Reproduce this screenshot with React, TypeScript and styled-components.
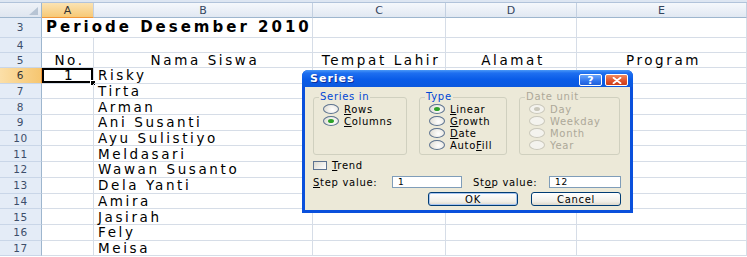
import React from 'react';
import styled, { createGlobalStyle, css } from 'styled-components';

const GlobalStyle = createGlobalStyle`
  html, body {
    margin: 0;
    padding: 0;
    background: #ffffff;
  }
`;

const Page = styled.div`
  position: relative;
  width: 747px;
  height: 257px;
  overflow: hidden;
  background: #fff;
  font-family: 'DejaVu Sans', 'Liberation Sans', sans-serif;
`;

const FormulaEdge = styled.div`
  height: 2px;
  background: #dde6f2;
  border-bottom: 1px solid #b1c3da;
`;

const Sheet = styled.div`
  display: grid;
  grid-template-columns: 42px 52px 219px 133px 131px 170px;
  grid-template-rows: 15px 19.5px 15px 15.5px repeat(12, 15.7px);
`;

const Corner = styled.div`
  box-sizing: border-box;
  display: flex;
  align-items: flex-end;
  justify-content: flex-end;
  padding: 0 3px 2px 0;
  background: linear-gradient(#eef2f8, #dfe6f0);
  border-right: 1px solid #9eb6ce;
  border-bottom: 1px solid #9eb6ce;
`;

const ColHead = styled.div<{ $active?: boolean }>`
  box-sizing: border-box;
  display: flex;
  align-items: center;
  justify-content: center;
  font-size: 11px;
  color: #34455f;
  background: linear-gradient(#f5f8fc, #e1e8f2);
  border-right: 1px solid #c3d0e1;
  border-bottom: 1px solid #9eb6ce;

  ${(p) =>
    p.$active &&
    css`
      color: #333;
      background: linear-gradient(#fbe3b3, #f7c976);
      border-bottom-color: #f29536;
    `}
`;

const RowHead = styled.div<{ $active?: boolean }>`
  box-sizing: border-box;
  display: flex;
  align-items: center;
  justify-content: center;
  font-size: 10.5px;
  letter-spacing: 0.6px;
  color: #3c4e6a;
  background: #e4ecf7;
  border-right: 1px solid #9eb6ce;
  border-bottom: 1px solid #c9d6e8;

  ${(p) =>
    p.$active &&
    css`
      color: #333;
      background: linear-gradient(90deg, #fbdfa8, #f6c670);
      border-right-color: #f29536;
    `}
`;

const Cell = styled.div<{ $align?: 'left' | 'center'; $bold?: boolean; $span?: number; $selected?: boolean }>`
  position: relative;
  box-sizing: border-box;
  display: flex;
  align-items: center;
  justify-content: ${(p) => (p.$align === 'center' ? 'center' : 'flex-start')};
  grid-column: span ${(p) => p.$span ?? 1};
  padding: 0 0 0 4px;
  border-right: 1px solid #d6dde7;
  border-bottom: 1px solid #d6dde7;
  color: #000;
  font-size: ${(p) => (p.$bold ? 15 : 13.5)}px;
  font-weight: ${(p) => (p.$bold ? 700 : 400)};
  letter-spacing: ${(p) => (p.$bold ? 3 : 2.6)}px;
  white-space: nowrap;

  ${(p) =>
    p.$selected &&
    css`
      box-shadow: inset 0 0 0 2px #000;

      &::after {
        content: '';
        position: absolute;
        right: -3px;
        bottom: -3px;
        width: 4px;
        height: 4px;
        background: #000;
        border: 1px solid #fff;
      }
    `}
`;

/* ---------- Series dialog ---------- */

const Dialog = styled.div`
  position: absolute;
  left: 302px;
  top: 70px;
  width: 331px;
  height: 143px;
  display: flex;
  flex-direction: column;
  background: #0a50dc;
  border-radius: 6px 6px 0 0;
  font-family: 'DejaVu Sans', 'Liberation Sans', sans-serif;
  font-size: 10px;
  letter-spacing: 0.7px;
  color: #000;
`;

const TitleBar = styled.div`
  height: 17px;
  display: flex;
  align-items: center;
  padding: 0 5px 0 8px;
  border-radius: 6px 6px 0 0;
  background: linear-gradient(#4a98f7 0%, #1e6ff0 18%, #0a5ce8 55%, #0b58de 100%);
`;

const TitleText = styled.span`
  flex: 1;
  color: #fff;
  font-size: 11px;
  font-weight: 700;
  letter-spacing: 1px;
  text-shadow: 1px 1px 0 #0b2f9a;
`;

const CaptionButtons = styled.div`
  display: flex;
  gap: 3px;
  align-self: flex-end;
  margin-bottom: 1px;
`;

const CaptionButton = styled.div<{ $close?: boolean }>`
  width: 23px;
  height: 12px;
  box-sizing: border-box;
  display: flex;
  align-items: center;
  justify-content: center;
  border: 1px solid #fff;
  border-radius: 2px;
  color: #fff;
  font-size: 11px;
  font-weight: 700;
  letter-spacing: 0;
  background: ${(p) =>
    p.$close ? 'linear-gradient(#f08a5e, #e0502a 60%, #c93d1a)' : 'linear-gradient(#6aa5fa, #2f74ee 60%, #1f5ed8)'};
`;

const Body = styled.div`
  flex: 1;
  margin: 0 3px 3px;
  padding: 4px 9px 4px 8px;
  display: flex;
  flex-direction: column;
  background: #ece9d8;
`;

const GroupRow = styled.div`
  display: flex;
  gap: 12px;
  height: 64px;
`;

const Group = styled.fieldset<{ $w: number }>`
  width: ${(p) => p.$w}px;
  min-width: 0;
  margin: 0;
  padding: 0 0 0 9px;
  box-sizing: border-box;
  border: 1px solid #d0d0bf;
  border-radius: 3px;
`;

const Legend = styled.legend<{ $disabled?: boolean }>`
  margin-left: -4px;
  padding: 0 1px;
  line-height: 12px;
  color: ${(p) => (p.$disabled ? '#aca899' : '#0046d5')};
`;

const OptionRow = styled.div<{ $disabled?: boolean }>`
  height: 12px;
  display: flex;
  align-items: center;
  gap: 5px;
  color: ${(p) => (p.$disabled ? '#aca899' : '#000')};
`;

const Radio = styled.span<{ $checked?: boolean; $disabled?: boolean }>`
  position: relative;
  width: 16px;
  height: 10px;
  box-sizing: border-box;
  border-radius: 50%;
  border: 1px solid ${(p) => (p.$disabled ? '#cac8bb' : '#5d7390')};
  background: ${(p) => (p.$disabled ? '#f4f3ee' : 'radial-gradient(circle at 60% 60%, #ffffff, #dcd9cf)')};

  ${(p) =>
    p.$checked &&
    css`
      &::after {
        content: '';
        position: absolute;
        left: 4px;
        top: 2px;
        width: 6px;
        height: 4px;
        border-radius: 50%;
        background: ${p.$disabled ? '#cac8bb' : '#2ea22a'};
      }
    `}
`;

const FieldRow = styled.div<{ $gap?: number }>`
  display: flex;
  align-items: center;
  height: 12px;
  margin-top: ${(p) => p.$gap ?? 0}px;
`;

const CheckBox = styled.span`
  width: 14px;
  height: 9px;
  box-sizing: border-box;
  margin-right: 5px;
  border: 1px solid #5d7390;
  background: linear-gradient(135deg, #dcdad0, #ffffff);
`;

const FieldLabel = styled.span<{ $w: number }>`
  width: ${(p) => p.$w}px;
`;

const TextInput = styled.div<{ $w: number }>`
  width: ${(p) => p.$w}px;
  height: 12px;
  box-sizing: border-box;
  display: flex;
  align-items: center;
  padding-left: 5px;
  font-size: 9px;
  background: #fff;
  border: 1px solid #7f9db9;
`;

const ButtonRow = styled.div`
  display: flex;
  justify-content: flex-end;
  gap: 13px;
  margin-top: 4px;
`;

const PushButton = styled.div<{ $default?: boolean }>`
  width: 90px;
  height: 14px;
  box-sizing: border-box;
  display: flex;
  align-items: center;
  justify-content: center;
  border: 1px solid #003c74;
  border-radius: 3px;
  background: linear-gradient(#ffffff, #f1efe8 70%, #dcd7cb);
  ${(p) => p.$default && 'box-shadow: inset 0 0 0 1px #a8c5f0;'}
`;

const Spacer = styled.span`
  width: 11px;
`;

const names = [
  'Risky',
  'Tirta',
  'Arman',
  'Ani Susanti',
  'Ayu Sulistiyo',
  'Meldasari',
  'Wawan Susanto',
  'Dela Yanti',
  'Amira',
  'Jasirah',
  'Fely',
  'Meisa',
];

const headers = ['No.', 'Nama Siswa', 'Tempat Lahir', 'Alamat', 'Program'];

const CornerMark = () => (
  <svg width="9" height="8" viewBox="0 0 9 8">
    <polygon points="9,0 9,8 0,8" fill="#b7c4d4" />
  </svg>
);

const CloseGlyph = () => (
  <svg width="10" height="7" viewBox="0 0 10 7">
    <path d="M1.5 0.8 L8.5 6.2 M8.5 0.8 L1.5 6.2" stroke="#fff" strokeWidth="1.8" strokeLinecap="round" />
  </svg>
);

const SeriesDialog = () => (
  <Dialog>
    <TitleBar>
      <TitleText>Series</TitleText>
      <CaptionButtons>
        <CaptionButton>?</CaptionButton>
        <CaptionButton $close>
          <CloseGlyph />
        </CaptionButton>
      </CaptionButtons>
    </TitleBar>
    <Body>
      <GroupRow>
        <Group $w={94}>
          <Legend>Series in</Legend>
          <OptionRow>
            <Radio />
            <span>
              <u>R</u>ows
            </span>
          </OptionRow>
          <OptionRow>
            <Radio $checked />
            <span>
              <u>C</u>olumns
            </span>
          </OptionRow>
        </Group>
        <Group $w={88}>
          <Legend>Type</Legend>
          <OptionRow>
            <Radio $checked />
            <span>
              <u>L</u>inear
            </span>
          </OptionRow>
          <OptionRow>
            <Radio />
            <span>
              <u>G</u>rowth
            </span>
          </OptionRow>
          <OptionRow>
            <Radio />
            <span>
              <u>D</u>ate
            </span>
          </OptionRow>
          <OptionRow>
            <Radio />
            <span>
              Auto<u>F</u>ill
            </span>
          </OptionRow>
        </Group>
        <Group $w={101}>
          <Legend $disabled>Date unit</Legend>
          <OptionRow $disabled>
            <Radio $checked $disabled />
            <span>Day</span>
          </OptionRow>
          <OptionRow $disabled>
            <Radio $disabled />
            <span>Weekday</span>
          </OptionRow>
          <OptionRow $disabled>
            <Radio $disabled />
            <span>Month</span>
          </OptionRow>
          <OptionRow $disabled>
            <Radio $disabled />
            <span>Year</span>
          </OptionRow>
        </Group>
      </GroupRow>

      <FieldRow $gap={4}>
        <CheckBox />
        <span>
          <u>T</u>rend
        </span>
      </FieldRow>

      <FieldRow $gap={5}>
        <FieldLabel $w={79}>
          <u>S</u>tep value:
        </FieldLabel>
        <TextInput $w={70}>1</TextInput>
        <Spacer />
        <FieldLabel $w={76}>
          St<u>o</u>p value:
        </FieldLabel>
        <TextInput $w={72}>12</TextInput>
      </FieldRow>

      <ButtonRow>
        <PushButton $default>OK</PushButton>
        <PushButton>Cancel</PushButton>
      </ButtonRow>
    </Body>
  </Dialog>
);

export default function App() {
  return (
    <Page>
      <GlobalStyle />
      <FormulaEdge />
      <Sheet>
        <Corner>
          <CornerMark />
        </Corner>
        {['A', 'B', 'C', 'D', 'E'].map((c) => (
          <ColHead key={c} $active={c === 'A'}>
            {c}
          </ColHead>
        ))}

        <RowHead>3</RowHead>
        <Cell $bold $span={2}>
          Periode Desember 2010
        </Cell>
        <Cell />
        <Cell />
        <Cell />

        <RowHead>4</RowHead>
        <Cell />
        <Cell />
        <Cell />
        <Cell />
        <Cell />

        <RowHead>5</RowHead>
        {headers.map((h) => (
          <Cell key={h} $align="center">
            {h}
          </Cell>
        ))}

        {names.map((name, i) => (
          <React.Fragment key={name}>
            <RowHead $active={i === 0}>{i + 6}</RowHead>
            <Cell $align="center" $selected={i === 0}>
              {i === 0 ? '1' : ''}
            </Cell>
            <Cell>{name}</Cell>
            <Cell />
            <Cell />
            <Cell />
          </React.Fragment>
        ))}
      </Sheet>
      <SeriesDialog />
    </Page>
  );
}
